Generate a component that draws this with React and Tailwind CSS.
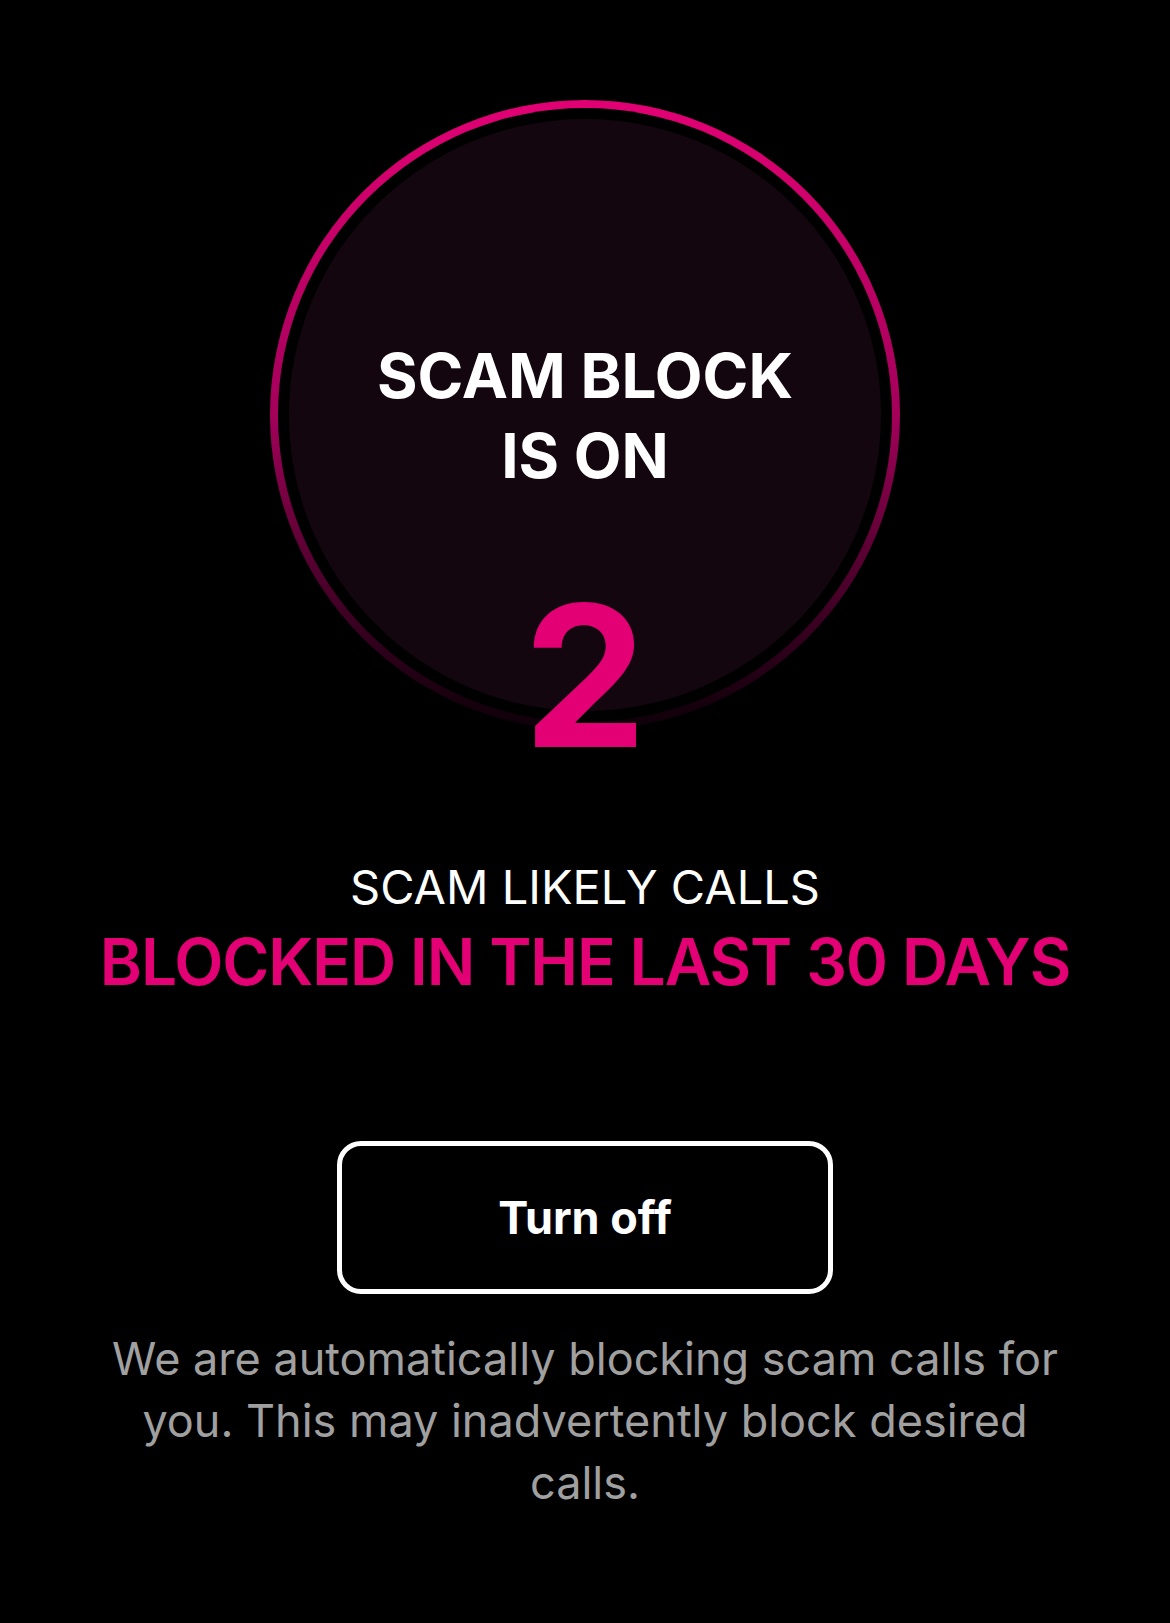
export default function App() {
  return (
    <div
      className="min-h-[1623px] w-full bg-black flex flex-col items-center text-center"
      style={{ fontFamily: 'Inter, "Liberation Sans", sans-serif' }}
    >
      {/* status ring */}
      <div className="mt-[100px] w-[630px] h-[630px] rounded-full p-[8px] bg-gradient-to-b from-[#e20074] via-[#a3005a] to-[#0d0008]">
        <div className="w-full h-full rounded-full bg-black p-[11px]">
          <div className="w-full h-full rounded-full bg-[#13060f] flex flex-col items-center pt-[217px]">
            <h1 className="text-[62px] leading-[80px] font-bold text-white">
              SCAM BLOCK
              <br />
              IS ON
            </h1>
            <div className="mt-[82px] text-[196px] leading-[196px] font-bold text-[#e20074]">2</div>
          </div>
        </div>
      </div>

      <p className="mt-[129px] text-[47px] leading-[56px] text-white">SCAM LIKELY CALLS</p>
      <p className="mt-[8px] text-[64px] leading-[77px] font-semibold tracking-[-1.1px] text-[#e20074]">
        BLOCKED IN THE LAST 30 DAYS
      </p>

      <button className="mt-[141px] w-[496px] h-[153px] rounded-[24px] border-[5px] border-white bg-black text-white text-[45px] font-bold">
        Turn off
      </button>

      <p className="mt-[34px] w-[980px] text-[45px] leading-[62px] text-[#a0a0a0]">
        We are automatically blocking scam calls for you. This may inadvertently block desired calls.
      </p>
    </div>
  );
}
